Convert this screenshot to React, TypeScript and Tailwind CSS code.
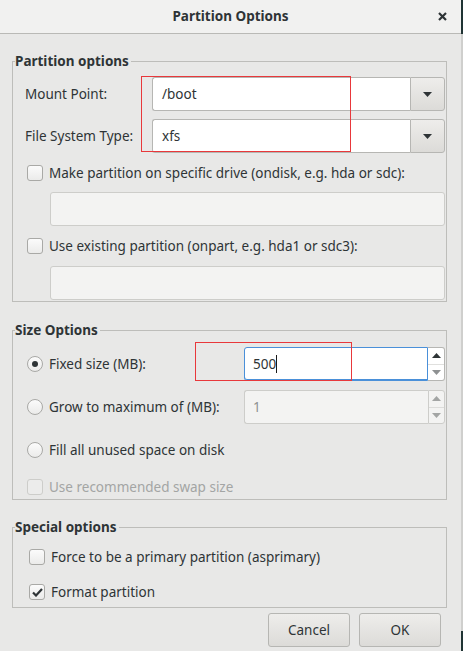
import { ReactNode } from 'react';

const font = { fontFamily: '"Noto Sans", "Open Sans", sans-serif' };

const Arrow = ({ up, color }: { up?: boolean; color: string }) => (
  <svg width="9" height="5" viewBox="0 0 9 5">
    <path d={up ? 'M0 5h9L4.5 0z' : 'M0 0h9L4.5 5z'} fill={color} />
  </svg>
);

const Combo = ({ value }: { value: string }) => (
  <div className="flex h-[34px] flex-1">
    <div className="flex flex-1 items-center rounded-l-[3px] border border-r-0 border-[#b6b6b3] bg-white pl-[9px] text-[#2e3436]">
      {value}
    </div>
    <div className="flex w-[35px] items-center justify-center rounded-r-[3px] border border-[#b6b6b3] bg-gradient-to-b from-[#eeedeb] to-[#dcdbd8]">
      <Arrow color="#2e3436" />
    </div>
  </div>
);

const Box = ({ checked, disabled }: { checked?: boolean; disabled?: boolean }) => (
  <span
    className={`flex h-4 w-4 shrink-0 items-center justify-center rounded-[3px] border ${
      disabled ? 'border-[#cdcdca] bg-[#ececeb]' : 'border-[#a9a9a6] bg-gradient-to-b from-[#fbfbfb] to-[#ebebea]'
    }`}
  >
    {checked && (
      <svg width="11" height="9" viewBox="0 0 11 9">
        <path d="M1 4.5 4 7.5 10 1" stroke="#2e3436" strokeWidth="2.2" fill="none" />
      </svg>
    )}
  </span>
);

const Radio = ({ on }: { on?: boolean }) => (
  <span className="flex h-4 w-4 shrink-0 items-center justify-center rounded-full border border-[#a9a9a6] bg-gradient-to-b from-[#fbfbfb] to-[#ebebea]">
    {on && <span className="h-[6px] w-[6px] rounded-full bg-[#2e3436]" />}
  </span>
);

const Option = ({ control, children, muted }: { control: ReactNode; children: ReactNode; muted?: boolean }) => (
  <div className={`flex h-5 items-center gap-[6px] ${muted ? 'text-[#a3a5a4]' : 'text-[#2e3436]'}`}>
    {control}
    <span>{children}</span>
  </div>
);

const Frame = ({ title, className, children }: { title: string; className: string; children: ReactNode }) => (
  <fieldset className={`w-[435px] border border-[#bdbdba] pl-[12px] pr-px ${className}`}>
    <legend className="-ml-[10px] pr-[2px] text-[13.5px] font-bold leading-[20px] text-[#2e3436]">{title}</legend>
    {children}
  </fieldset>
);

const App = () => {
  return (
    <div className="flex h-[651px] w-[463px] text-[13.5px] text-[#2e3436]" style={font}>
      <div className="relative flex h-full w-[461px] flex-col bg-[#e8e8e7]">
        {/* title bar */}
        <div className="relative flex h-[34px] shrink-0 items-center justify-center border-b border-[#b9b9b6] bg-[#f1f1f0]">
          <span className="font-bold">Partition Options</span>
          <svg className="absolute right-[14px] top-[12px]" width="9" height="9" viewBox="0 0 9 9">
            <path d="M1 1l7 7M8 1 1 8" stroke="#2e3436" strokeWidth="2.2" />
          </svg>
        </div>

        <div className="pl-[12px]">
          <Frame title="Partition options" className="mt-[17px] pt-[6px] pb-px">
            <div className="flex items-center">
              <span className="w-[127px]">Mount Point:</span>
              <Combo value="/boot" />
            </div>
            <div className="mt-[8px] flex items-center">
              <span className="w-[127px]">File System Type:</span>
              <Combo value="xfs" />
            </div>
            <div className="mt-[10px] pl-[2px]">
              <Option control={<Box />}>Make partition on specific drive (ondisk, e.g. hda or sdc):</Option>
            </div>
            <div className="ml-[25px] mt-[9px] h-[34px] rounded-[3px] border border-[#cdcdca] bg-[#f3f3f2]" />
            <div className="mt-[10px] pl-[2px]">
              <Option control={<Box />}>Use existing partition (onpart, e.g. hda1 or sdc3):</Option>
            </div>
            <div className="ml-[25px] mt-[10px] h-[34px] rounded-[3px] border border-[#cdcdca] bg-[#f3f3f2]" />
          </Frame>

          <Frame title="Size Options" className="mt-[18px] pt-[7px] pb-[2px]">
            <div className="flex h-[34px] items-center pl-[2px]">
              <Option control={<Radio on />}>Fixed size (MB):</Option>
              <div className="ml-auto flex h-[34px] w-[201px]">
                <div className="flex flex-1 items-center rounded-l-[3px] border border-[#4a90d9] bg-white pl-[8px] shadow-[inset_0_-1px_0_#4a90d9]">
                  500
                  <span className="h-[18px] w-px bg-[#1a1a1a]" />
                </div>
                <div className="flex w-[17px] flex-col rounded-r-[3px] border border-l-0 border-[#b6b6b3] bg-white">
                  <div className="flex flex-1 items-center justify-center border-b border-[#e0e0de]">
                    <Arrow up color="#2e3436" />
                  </div>
                  <div className="flex flex-1 items-center justify-center">
                    <Arrow color="#8e9192" />
                  </div>
                </div>
              </div>
            </div>
            <div className="mt-[9px] flex h-[34px] items-center pl-[2px]">
              <Option control={<Radio />}>Grow to maximum of (MB):</Option>
              <div className="ml-auto flex h-[34px] w-[201px]">
                <div className="flex flex-1 items-center rounded-l-[3px] border border-r-0 border-[#cdcdca] bg-[#f3f3f2] pl-[8px] text-[#8e9192]">
                  1
                </div>
                <div className="flex w-[17px] flex-col rounded-r-[3px] border border-[#cdcdca] bg-[#f3f3f2]">
                  <div className="flex flex-1 items-center justify-center border-b border-[#dcdcda]">
                    <Arrow up color="#a3a5a4" />
                  </div>
                  <div className="flex flex-1 items-center justify-center">
                    <Arrow color="#a3a5a4" />
                  </div>
                </div>
              </div>
            </div>
            <div className="mt-[16px] pl-[2px]">
              <Option control={<Radio />}>Fill all unused space on disk</Option>
            </div>
            <div className="mt-[17px] pl-[2px]">
              <Option control={<Box disabled />} muted>
                Use recommended swap size
              </Option>
            </div>
          </Frame>

          <Frame title="Special options" className="mt-[17px] pt-[10px] pb-[5px]">
            <div className="pl-[4px]">
              <Option control={<Box />}>Force to be a primary partition (asprimary)</Option>
            </div>
            <div className="mt-[15px] pl-[4px]">
              <Option control={<Box checked />}>Format partition</Option>
            </div>
          </Frame>
        </div>

        <div className="mt-[5px] flex justify-end gap-[9px] pr-[20px]">
          <button className="h-[34px] w-[82px] rounded-[3px] border border-[#b6b6b3] bg-gradient-to-b from-[#eeedeb] to-[#dcdbd8] text-[#2e3436]">
            Cancel
          </button>
          <button className="h-[34px] w-[82px] rounded-[3px] border border-[#b6b6b3] bg-gradient-to-b from-[#eeedeb] to-[#dcdbd8] text-[#2e3436]">
            OK
          </button>
        </div>

        {/* red annotation boxes */}
        <div className="pointer-events-none absolute left-[141px] top-[76px] h-[76px] w-[210px] border border-[#e8383b]" />
        <div className="pointer-events-none absolute left-[195px] top-[342px] h-[39px] w-[157px] border border-[#e8383b]" />
      </div>
      <div className="flex w-[2px] flex-col bg-[#cfcfcd]">
        <div className="h-[34px] bg-[#1f3333]" />
        <div className="flex-1" />
        <div className="h-[20px] bg-[#1f3333]" />
      </div>
    </div>
  );
};

export default App;
